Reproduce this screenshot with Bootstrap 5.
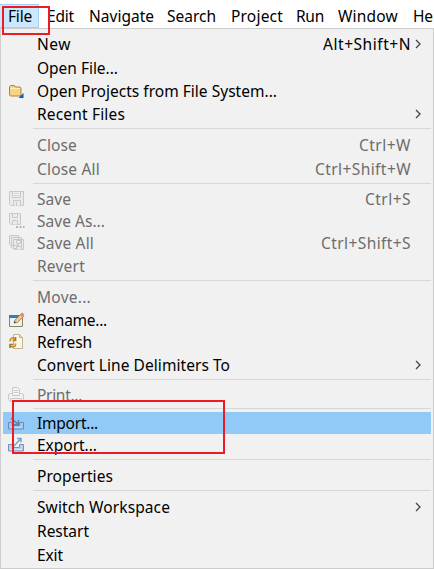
<!DOCTYPE html>
<html lang="en">
<head>
<meta charset="utf-8">
<meta name="viewport" content="width=device-width, initial-scale=1">
<title>File menu</title>
<link href="https://cdn.jsdelivr.net/npm/bootstrap@5.3.0/dist/css/bootstrap.min.css" rel="stylesheet">
<style>
body{width:434px;height:569px;font:15.5px/22px "Noto Sans","Open Sans",sans-serif;color:#000;background:#fff}
.menubar{height:28px;padding-top:4px}
.menubar .top-item{height:24px;line-height:22px;flex:none;border:1px solid transparent;border-width:1px 0;padding-left:8px;white-space:nowrap}
.menubar .top-item.open{background:#cce8ff;border:1px solid #99d1ff;border-left-width:0}
.top-item span,.entry-label,.shortcut{display:inline-block;white-space:nowrap}
.file-menu{width:434px;height:541px;background:#f1f1f1;border:1px solid #ccc;padding:3px 2px 0}
.entry{height:24px;color:#000}
.entry.short{height:22px}
.entry.disabled-entry{color:#6d6d6d}
.entry.selected{background:#91c9f7}
.gutter{width:34px;flex:none;padding-left:5px}
.gutter svg{display:block}
.shortcut{margin-left:auto;margin-right:20px}
.arrow{width:6px;height:10px;margin-left:auto;margin-right:10px;flex:none}
.shortcut + .arrow{margin-left:-16px}
.rule{height:7px;padding:2px 0 0 30px}
.rule::after{content:"";display:block;height:1px;background:#d7d7d7}
.rule.tight{height:6px}
.rule.loose{height:8px;padding-top:3px}
.mark-box{position:absolute;border:2px solid #ed1c24;pointer-events:none}
.mark-file{left:2px;top:6px;width:48px;height:29px}
.mark-import{left:12px;top:400px;width:213px;height:54px}
</style>
</head>
<body class="position-relative overflow-hidden">
<nav class="menubar d-flex">
<div class="top-item open" style="width:39px"><span data-w="24">File</span></div>
<div class="top-item" style="width:42px"><span data-w="27">Edit</span></div>
<div class="top-item" style="width:78px"><span data-w="65">Navigate</span></div>
<div class="top-item" style="width:64px"><span data-w="49">Search</span></div>
<div class="top-item" style="width:65px"><span data-w="52">Project</span></div>
<div class="top-item" style="width:42px"><span data-w="28">Run</span></div>
<div class="top-item" style="width:75px"><span data-w="60">Window</span></div>
<div class="top-item"><span data-w="20">He</span></div>
</nav>
<main class="file-menu">
<div class="entry d-flex align-items-center"><div class="gutter"></div><span class="entry-label" data-w="34">New</span><span class="shortcut" data-w="88">Alt+Shift+N</span><svg class="arrow" viewBox="0 0 6 10"><path d="M1 1l4 4-4 4" fill="none" stroke="#444" stroke-width="1.3"/></svg></div>
<div class="entry d-flex align-items-center"><div class="gutter"></div><span class="entry-label" data-w="81">Open File...</span></div>
<div class="entry short d-flex align-items-center"><div class="gutter"><svg width="18" height="16" viewBox="0 0 18 16"><path d="M1.500 12V3.500l1-1h4l1 1.500h4.500l1 1V12l-1 1H2.500z" fill="#f6d385" stroke="#b9803c"/><path d="M2.500 5.500h9.500" stroke="#fff0bd"/><path d="M15.500 10v5h-5z" fill="#0860a8"/></svg></div><span class="entry-label" data-w="240">Open Projects from File System...</span></div>
<div class="entry d-flex align-items-center"><div class="gutter"></div><span class="entry-label" data-w="88">Recent Files</span><svg class="arrow" viewBox="0 0 6 10"><path d="M1 1l4 4-4 4" fill="none" stroke="#444" stroke-width="1.3"/></svg></div>
<div class="rule"></div>
<div class="entry disabled-entry d-flex align-items-center"><div class="gutter"></div><span class="entry-label" data-w="40">Close</span><span class="shortcut" data-w="52">Ctrl+W</span></div>
<div class="entry disabled-entry d-flex align-items-center"><div class="gutter"></div><span class="entry-label" data-w="63">Close All</span><span class="shortcut" data-w="96">Ctrl+Shift+W</span></div>
<div class="rule"></div>
<div class="entry short disabled-entry d-flex align-items-center"><div class="gutter"><svg width="18" height="16" viewBox="0 0 18 16"><g fill="#ebebeb" stroke="#c8c8c8"><path d="M1.500.500h14v14H3l-1.500-1.500z"/><path d="M4.500.500h8v6h-8zM5.500 14.500v-5h7v5M8.500 11v3.500"/><path d="M6 2.500h5M6 4.500h5" stroke="#dadada"/></g></svg></div><span class="entry-label" data-w="34">Save</span><span class="shortcut" data-w="46">Ctrl+S</span></div>
<div class="entry short disabled-entry d-flex align-items-center"><div class="gutter"><svg width="18" height="16" viewBox="0 0 18 16"><g fill="#ebebeb" stroke="#c8c8c8"><path d="M1.500.500h11v11H3l-1.500-1.500z"/><path d="M4.500.500h5v4h-5zM4.500 11.500v-4h5v4"/></g><path d="M8 13h2v2H8zM11.500 13h2v2h-2zM15 13h1.500v2H15z" fill="#b5b5b5"/></svg></div><span class="entry-label" data-w="68">Save As...</span></div>
<div class="entry short disabled-entry d-flex align-items-center"><div class="gutter"><svg width="18" height="16" viewBox="0 0 18 16"><g fill="#ebebeb" stroke="#c8c8c8"><path d="M1.500.500h9v10h-8l-1-1zM3.500 2.500h10v11h-9l-1-1zM5.500 4.500h10v10h-9l-1-1z"/><path d="M8.500 5.500h4v3h-4zM8.500 14.500v-3h5v3"/></g></svg></div><span class="entry-label" data-w="57">Save All</span><span class="shortcut" data-w="90">Ctrl+Shift+S</span></div>
<div class="entry disabled-entry d-flex align-items-center"><div class="gutter"></div><span class="entry-label" data-w="48">Revert</span></div>
<div class="rule"></div>
<div class="entry disabled-entry d-flex align-items-center"><div class="gutter"></div><span class="entry-label" data-w="54">Move...</span></div>
<div class="entry short d-flex align-items-center"><div class="gutter"><svg width="18" height="16" viewBox="0 0 18 16"><path d="M1.500 3.500h13v11h-13z" fill="#e8f4fc" stroke="#8f8454"/><path d="M1 3h13v3H1z" fill="#347db9"/><path d="M6 11l1-3 6-6 2.500 2.500-6 6z" fill="#f2c886" stroke="#9b6b45" stroke-width=".7"/><path d="M12 2.500l2-2 2.500 2-2 2.500z" fill="#d98880"/><path d="M6 11l.5-2 1.500 1.500z" fill="#333"/></svg></div><span class="entry-label" data-w="70">Rename...</span></div>
<div class="entry short d-flex align-items-center"><div class="gutter"><svg width="18" height="16" viewBox="0 0 18 16"><path d="M5.500.500h6l3 3v11h-9z" fill="#fbf7e6" stroke="#bcb58d"/><path d="M11.500.500v3h3" fill="#ddd6ae" stroke="#bcb58d"/><path d="M2.200 7.500c-.5-3 2.300-4.500 4.500-2.500M7.500 3v3.500H4.500M7.500 9.500c.4 3-2.500 4.500-4.500 2.500M2 14v-3.500h3" fill="none" stroke="#b57a25" stroke-width="1.700"/><path d="M2.500 7c0-2 2-3 3.800-1.500M7.200 10c0 2-2 3-3.800 1.500" fill="none" stroke="#f2c65d" stroke-width=".8"/></svg></div><span class="entry-label" data-w="55">Refresh</span></div>
<div class="entry d-flex align-items-center"><div class="gutter"></div><span class="entry-label" data-w="193">Convert Line Delimiters To</span><svg class="arrow" viewBox="0 0 6 10"><path d="M1 1l4 4-4 4" fill="none" stroke="#444" stroke-width="1.3"/></svg></div>
<div class="rule"></div>
<div class="entry short disabled-entry d-flex align-items-center"><div class="gutter"><svg width="18" height="16" viewBox="0 0 18 16"><g fill="#f2f2f2" stroke="#c8c8c8"><path d="M.500 7.500l2-1h11l2 1v5l-1 1h-13l-1-1z"/><path d="M4.500 8.500v-8h5l2 2v6zM2.500 11.500h11v3h-11z"/><path d="M6 3.500h4M6 5.500h4"/></g></svg></div><span class="entry-label" data-w="45">Print...</span></div>
<div class="rule tight"></div>
<div class="entry short selected d-flex align-items-center"><div class="gutter"><svg width="18" height="16" viewBox="0 0 18 16"><path d="M.500 7.500h4v3h7v-3h4v6.500H.500z" fill="#a9c6e6" stroke="#6e8cb8"/><path d="M2 12.500h12" stroke="#c3d9f0"/><path d="M3 3l7 6M10.500 5v4.500H6" fill="none" stroke="#5585ab" stroke-width="1.400"/></svg></div><span class="entry-label" data-w="61">Import...</span></div>
<div class="entry short d-flex align-items-center"><div class="gutter"><svg width="18" height="16" viewBox="0 0 18 16"><path d="M.500 7.500h4v3h7v-3h4v6.500H.500z" fill="#bdd2e9" stroke="#7490bd"/><path d="M2 12.500h12" stroke="#dbe8f5"/><path d="M6 9l7-7.500M9 1.500h4v4" fill="none" stroke="#78a2c0" stroke-width="1.400"/></svg></div><span class="entry-label" data-w="60">Export...</span></div>
<div class="rule loose"></div>
<div class="entry d-flex align-items-center"><div class="gutter"></div><span class="entry-label" data-w="76">Properties</span></div>
<div class="rule"></div>
<div class="entry d-flex align-items-center"><div class="gutter"></div><span class="entry-label" data-w="133">Switch Workspace</span><svg class="arrow" viewBox="0 0 6 10"><path d="M1 1l4 4-4 4" fill="none" stroke="#444" stroke-width="1.3"/></svg></div>
<div class="entry d-flex align-items-center"><div class="gutter"></div><span class="entry-label" data-w="52">Restart</span></div>
<div class="entry d-flex align-items-center"><div class="gutter"></div><span class="entry-label" data-w="26">Exit</span></div>
</main>
<div class="mark-box mark-file"></div>
<div class="mark-box mark-import"></div>
<script src="https://cdn.jsdelivr.net/npm/bootstrap@5.3.0/dist/js/bootstrap.bundle.min.js"></script>
<script>
// Track each label to its intended advance width.
document.querySelectorAll('[data-w]').forEach(el => {
  const gap = (Number(el.dataset.w) - el.getBoundingClientRect().width) / el.textContent.length;
  el.style.letterSpacing = gap.toFixed(3) + 'px';
});
</script>
</body>
</html>
